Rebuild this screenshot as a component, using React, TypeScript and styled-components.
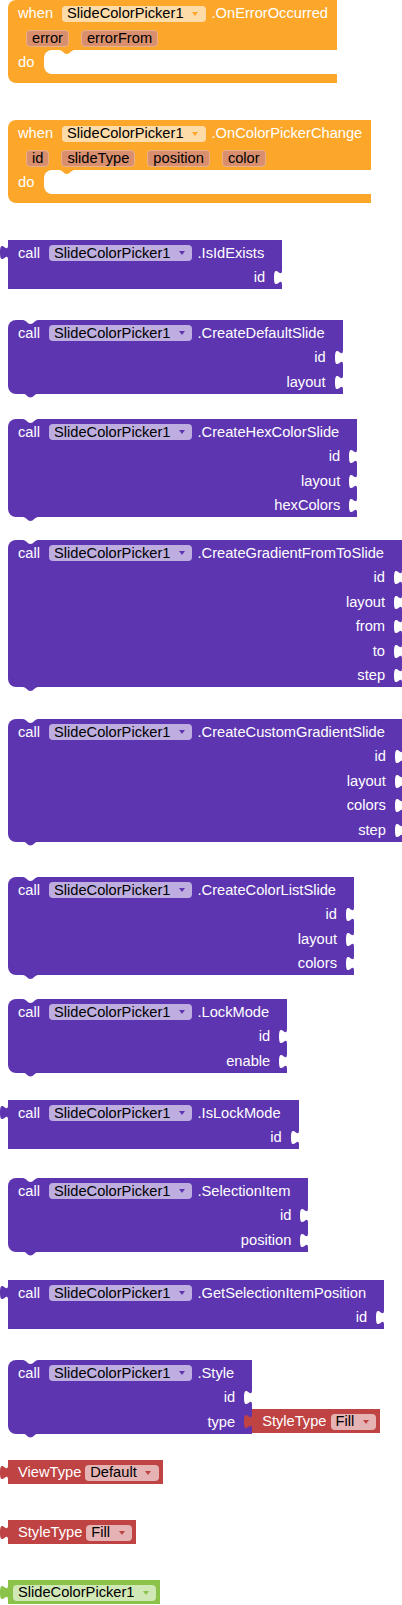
import React from "react";
import styled, { createGlobalStyle, css } from "styled-components";

const ORANGE = "#FDA72A";
const PURPLE = "#5E35B1";
const RED = "#BF4343";
const GREEN = "#8BC34A";
const COMPONENT = "SlideColorPicker1";

const GlobalStyle = createGlobalStyle`
  html, body { margin: 0; padding: 0; background: #fff; overflow: hidden; }
  body { font-family: "Liberation Sans", Arial, sans-serif; font-size: 14.667px; }
`;

const Canvas = styled.main`
  width: 402px;
  height: 1605px;
  overflow: hidden;
  display: flex;
  flex-direction: column;
  align-items: flex-start;
`;

const Placement = styled.div<{ $top: number; $indent: boolean }>`
  margin-top: ${(p) => p.$top}px;
  margin-left: ${(p) => (p.$indent ? 8 : 0)}px;
  display: flex;
  align-items: flex-start;
  flex-shrink: 0;
`;

const NOTCH = `path("M0 0 C3 0 4.5 4 7.5 4 C10.5 4 12 0 15 0 Z")`;

const Body = styled.div<{ $color: string; $shape: "event" | "statement" | "value" }>`
  position: relative;
  background: ${(p) => p.$color};
  color: #fff;
  display: flex;
  flex-direction: column;
  flex-shrink: 0;
  white-space: nowrap;
  border-radius: ${(p) => (p.$shape === "value" ? "0" : "8px 0 0 8px")};
  ${(p) =>
    p.$shape === "statement" &&
    css`
      &::before,
      &::after {
        content: "";
        position: absolute;
        left: 15px;
        width: 15px;
        height: 4px;
        clip-path: ${NOTCH};
      }
      &::before {
        top: 0;
        background: #fff;
      }
      &::after {
        top: 100%;
        background: ${p.$color};
      }
    `}
`;

const HeadRow = styled.div<{ $padRight: number; $h: number; $padLeft?: number; $shift?: number }>`
  height: ${(p) => p.$h}px;
  box-sizing: border-box;
  display: flex;
  align-items: center;
  padding: ${(p) => p.$shift ?? 2}px ${(p) => p.$padRight}px 0 ${(p) => p.$padLeft ?? 10}px;
`;

const Keyword = styled.span`
  line-height: 1;
`;

const Method = styled.span<{ $gap: number }>`
  margin-left: ${(p) => p.$gap}px;
  line-height: 1;
`;

const Dropdown = styled.span<{ $gap: number }>`
  display: inline-flex;
  align-items: center;
  height: 16px;
  margin-left: ${(p) => p.$gap}px;
  padding: 0 7.5px 0 5px;
  border-radius: 4px;
  background: rgba(255, 255, 255, 0.6);
  color: #000;
  line-height: 1;
`;

const CaretSvg = styled.svg`
  width: 6px;
  height: 4px;
  margin-left: 8.5px;
  flex-shrink: 0;
`;

const Caret = ({ color }: { color: string }) => (
  <CaretSvg viewBox="0 0 6 4">
    <path d="M0 0 H6 L3 4 Z" fill={color} />
  </CaretSvg>
);

const Picker = ({ label, color, gap }: { label: string; color: string; gap: number }) => (
  <Dropdown $gap={gap}>
    {label}
    <Caret color={color} />
  </Dropdown>
);

const InputRow = styled.div`
  height: 24.5px;
  box-sizing: border-box;
  padding-top: 2px;
  display: flex;
  justify-content: flex-end;
  align-items: center;
`;

const InputLabel = styled.span`
  margin-right: 9px;
  line-height: 1;
`;

const SocketSvg = styled.svg`
  width: 8px;
  height: 15px;
  flex-shrink: 0;
  overflow: visible;
`;

const Socket = () => (
  <SocketSvg viewBox="0 0 8 15">
    <path d="M8 0 c0 10 -8 -8 -8 7.5 s8 -2.5 8 7.5 Z" fill="#fff" />
  </SocketSvg>
);

const TabSvg = styled.svg`
  width: 8px;
  height: 15px;
  margin-top: 5px;
  flex-shrink: 0;
  overflow: visible;
`;

const OutputTab = ({ color }: { color: string }) => (
  <TabSvg viewBox="0 0 8 15">
    <path d="M8.5 15 H8 c0 -10 -8 8 -8 -7.5 s8 2.5 8 -7.5 H8.5 Z" fill={color} />
  </TabSvg>
);

const ValueWrap = styled.div`
  display: flex;
  align-items: flex-start;
  flex-shrink: 0;
`;

const PlugSlot = styled.div`
  width: 8px;
  height: 24.5px;
  margin-top: -2px;
  display: flex;
  align-items: center;
  flex-shrink: 0;
`;

const ParamRow = styled.div`
  height: 25px;
  box-sizing: border-box;
  padding-top: 1px;
  display: flex;
  align-items: center;
  gap: 12px;
  padding-left: 18px;
`;

const Param = styled.span`
  display: inline-flex;
  align-items: center;
  height: 17px;
  box-sizing: border-box;
  padding: 0 5px;
  border: 1px solid #e9b08e;
  border-radius: 4px;
  background: #d98f6d;
  color: #000;
  line-height: 1;
`;

const DoRow = styled.div`
  height: 24px;
  display: flex;
  align-items: stretch;
  padding-left: 10px;
`;

const DoLabel = styled.span`
  align-self: center;
  line-height: 1;
`;

const StatementSlot = styled.div<{ $color: string }>`
  flex: 1;
  margin-left: 10px;
  background: #fff;
  border-radius: 8px 0 0 8px;
  position: relative;
  &::before {
    content: "";
    position: absolute;
    left: 15px;
    top: 0;
    width: 15px;
    height: 4px;
    background: ${(p) => p.$color};
    clip-path: ${NOTCH};
  }
`;

const BottomArm = styled.div`
  height: 9px;
`;

type EventDef = { name: string; params: string[]; top: number };
type CallDef = { name: string; inputs: string[]; top: number; value?: boolean };

const EventBlock = ({ name, params, top }: EventDef) => (
  <Placement $top={top} $indent>
    <Body $color={ORANGE} $shape="event">
      <HeadRow $h={25} $padRight={9}>
        <Keyword>when</Keyword>
        <Picker label={COMPONENT} color={ORANGE} gap={9} />
        <Method $gap={6}>{name}</Method>
      </HeadRow>
      <ParamRow>
        {params.map((p) => (
          <Param key={p}>{p}</Param>
        ))}
      </ParamRow>
      <DoRow>
        <DoLabel>do</DoLabel>
        <StatementSlot $color={ORANGE} />
      </DoRow>
      <BottomArm />
    </Body>
  </Placement>
);

const CallBody = ({
  name,
  inputs,
  value,
  plugged,
}: {
  name: string;
  inputs: string[];
  value?: boolean;
  plugged?: React.ReactNode;
}) => (
  <Body $color={PURPLE} $shape={value ? "value" : "statement"}>
    <HeadRow $h={24.5} $padRight={18}>
      <Keyword>call</Keyword>
      <Picker label={COMPONENT} color={PURPLE} gap={9} />
      <Method $gap={5}>{name}</Method>
    </HeadRow>
    {inputs.map((i, idx) => (
      <InputRow key={i}>
        <InputLabel>{i}</InputLabel>
        {plugged && idx === inputs.length - 1 ? <PlugSlot>{plugged}</PlugSlot> : <Socket />}
      </InputRow>
    ))}
  </Body>
);

const CallBlock = ({ name, inputs, top, value }: CallDef) => (
  <Placement $top={top} $indent={!value}>
    {value && <OutputTab color={PURPLE} />}
    <CallBody name={name} inputs={inputs} value={value} />
  </Placement>
);

const HelperBody = ({ label, option, color }: { label?: string; option: string; color: string }) => (
  <ValueWrap>
    <OutputTab color={color} />
    <Body $color={color} $shape="value">
      <HeadRow $h={24} $padRight={4} $padLeft={label ? 10 : 5} $shift={1}>
        {label && <Keyword>{label}</Keyword>}
        <Picker label={option} color={color} gap={label ? 4 : 0} />
      </HeadRow>
    </Body>
  </ValueWrap>
);

const HelperBlock = ({ top, ...rest }: { top: number; label?: string; option: string; color: string }) => (
  <Placement $top={top} $indent={false}>
    <HelperBody {...rest} />
  </Placement>
);

const calls: CallDef[] = [
  { name: ".IsIdExists", inputs: ["id"], top: 37, value: true },
  { name: ".CreateDefaultSlide", inputs: ["id", "layout"], top: 31 },
  { name: ".CreateHexColorSlide", inputs: ["id", "layout", "hexColors"], top: 25.5 },
  { name: ".CreateGradientFromToSlide", inputs: ["id", "layout", "from", "to", "step"], top: 23 },
  { name: ".CreateCustomGradientSlide", inputs: ["id", "layout", "colors", "step"], top: 32 },
  { name: ".CreateColorListSlide", inputs: ["id", "layout", "colors"], top: 35.5 },
  { name: ".LockMode", inputs: ["id", "enable"], top: 24 },
  { name: ".IsLockMode", inputs: ["id"], top: 27.5, value: true },
  { name: ".SelectionItem", inputs: ["id", "position"], top: 29 },
  { name: ".GetSelectionItemPosition", inputs: ["id"], top: 28.5, value: true },
];

export default function App() {
  return (
    <>
      <GlobalStyle />
      <Canvas>
        <EventBlock name=".OnErrorOccurred" params={["error", "errorFrom"]} top={0} />
        <EventBlock
          name=".OnColorPickerChange"
          params={["id", "slideType", "position", "color"]}
          top={37}
        />
        {calls.map((c) => (
          <CallBlock key={c.name} {...c} />
        ))}
        <Placement $top={31} $indent>
          <CallBody
            name=".Style"
            inputs={["id", "type"]}
            plugged={<HelperBody label="StyleType" option="Fill" color={RED} />}
          />
        </Placement>
        <HelperBlock top={26.5} label="ViewType" option="Default" color={RED} />
        <HelperBlock top={36} label="StyleType" option="Fill" color={RED} />
        <HelperBlock top={36} option={COMPONENT} color={GREEN} />
      </Canvas>
    </>
  );
}
